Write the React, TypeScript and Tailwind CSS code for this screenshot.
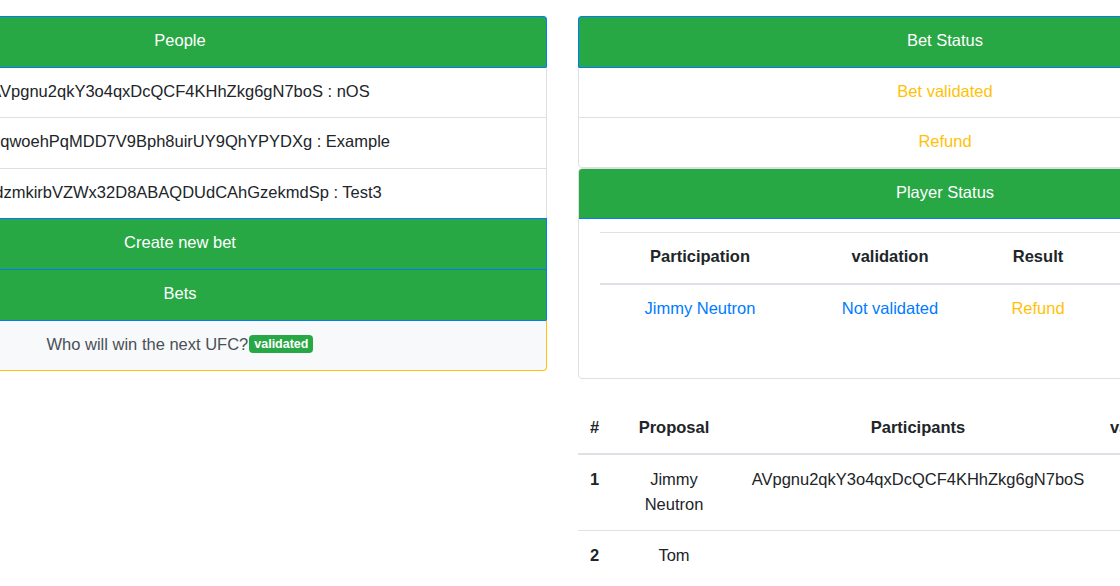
import React from "react";

const font = "font-['Liberation_Sans',Arial,Helvetica,sans-serif]";

function Item({
  children,
  h,
  kind,
  top = "gray",
  bottom,
  round,
  extra = "",
}: {
  children: React.ReactNode;
  h: string;
  kind: "green" | "white" | "light";
  top?: "blue" | "gray" | "none";
  bottom?: "gray" | "orange";
  round?: "t" | "b";
  extra?: string;
}) {
  const bg =
    kind === "green"
      ? "bg-[#28a745] text-white border-x-[#007bff]"
      : kind === "light"
      ? "bg-[#f8f9fa] text-[#495057] border-x-[#ffc107]"
      : "bg-white text-[#212529] border-x-[#dfdfdf]";
  const t = top === "blue" ? "border-t border-t-[#007bff]" : top === "gray" ? "border-t border-t-[#dfdfdf]" : "";
  const b =
    bottom === "gray"
      ? "border-b border-b-[#dfdfdf]"
      : bottom === "orange"
      ? "border-b border-b-[#ffc107]"
      : "";
  const r = round === "t" ? "rounded-t-[4px]" : round === "b" ? "rounded-b-[4px]" : "";
  return (
    <div className={`${h} ${bg} ${t} ${b} ${r} ${extra} border-x pb-[3px] flex items-center justify-center whitespace-nowrap text-[16.5px] leading-[25px]`}>
      {children}
    </div>
  );
}

export default function App() {
  return (
    <div className={`w-[1120px] h-[586px] overflow-hidden bg-white ${font}`}>
      <div className="flex gap-[31px] ml-[-187px] pt-[16px]">
        {/* Left column */}
        <div className="w-[734px] shrink-0 flex flex-col">
          <Item h="h-[51px]" kind="green" top="blue" round="t">People</Item>
          <Item h="h-[50px]" kind="white" top="blue">AVpgnu2qkY3o4qxDcQCF4KHhZkg6gN7boS : nOS</Item>
          <Item h="h-[51px]" kind="white">AKJqwoehPqMDD7V9Bph8uirUY9QhYPYDXg : Example</Item>
          <Item h="h-[50px]" kind="white" extra="pl-[5px]">AdzmkirbVZWx32D8ABAQDUdCAhGzekmdSp : Test3</Item>
          <Item h="h-[51px]" kind="green" top="blue">Create new bet</Item>
          <Item h="h-[51px]" kind="green" top="blue">Bets</Item>
          <Item h="h-[51px]" kind="light" top="blue" bottom="orange" round="b">
            <span>Who will win the next UFC?</span>
            <span className="ml-px bg-[#28a745] text-white text-[12.5px] leading-[12px] font-bold px-[5px] py-[3px] rounded-[4px]">
              validated
            </span>
          </Item>
        </div>

        {/* Right column */}
        <div className="w-[734px] shrink-0 flex flex-col">
          <Item h="h-[51px]" kind="green" top="blue" round="t">Bet Status</Item>
          <Item h="h-[50px]" kind="white" top="blue">
            <span className="text-[#ffc107]">Bet validated</span>
          </Item>
          <Item h="h-[51px]" kind="white" bottom="gray" round="b">
            <span className="text-[#ffc107]">Refund</span>
          </Item>

          <div className="border border-[#dfdfdf] rounded-[4px] overflow-hidden">
            <div className="h-[51px] -mx-px -mt-px pb-[3px] bg-[#28a745] text-white border border-[#007bff] flex items-center justify-center text-[16.5px] leading-[25px]">
              Player Status
            </div>
            <div className="px-[21px] pt-[13px] pb-[44px]">
              <table className="w-full border-collapse text-[16.5px] leading-[25px] text-[#212529]">
                <thead>
                  <tr className="h-[51px] border-t border-t-[#dee2e6] border-b-2 border-b-[#dee2e6]">
                    <th className="w-[200px] pb-[2px] font-bold text-center">Participation</th>
                    <th className="w-[180px] pb-[2px] font-bold text-center">validation</th>
                    <th className="w-[116px] pb-[2px] font-bold text-center">Result</th>
                    <th className="font-bold text-center"></th>
                  </tr>
                </thead>
                <tbody>
                  <tr className="h-[50px]">
                    <td className="pb-[2px] text-center text-[#007bff]">Jimmy Neutron</td>
                    <td className="pb-[2px] text-center text-[#007bff]">Not validated</td>
                    <td className="pb-[2px] text-center text-[#ffc107]">Refund</td>
                    <td></td>
                  </tr>
                </tbody>
              </table>
            </div>
          </div>

          <table className="mt-[24px] w-full border-collapse text-[16.5px] leading-[25px] text-[#212529] table-fixed">
            <thead>
              <tr className="border-b-2 border-b-[#dee2e6]">
                <th className="w-[32px] px-[12px] py-[12.5px] text-left font-bold">#</th>
                <th className="w-[128px] px-[12px] py-[12.5px] text-center font-bold">Proposal</th>
                <th className="w-[360px] px-[12px] py-[12.5px] text-center font-bold">Participants</th>
                <th className="px-[12px] py-[12.5px] text-left font-bold">validation</th>
              </tr>
            </thead>
            <tbody>
              <tr className="border-b border-b-[#dee2e6] align-top">
                <td className="px-[12px] py-[12.5px] font-bold">1</td>
                <td className="px-[12px] py-[12.5px] text-center">
                  Jimmy
                  <br />
                  Neutron
                </td>
                <td className="px-[12px] py-[12.5px] text-center whitespace-nowrap">AVpgnu2qkY3o4qxDcQCF4KHhZkg6gN7boS</td>
                <td className="px-[12px] py-[12.5px]"></td>
              </tr>
              <tr className="align-top">
                <td className="px-[12px] py-[12.5px] font-bold">2</td>
                <td className="px-[12px] py-[12.5px] text-center">Tom</td>
                <td className="px-[12px] py-[12.5px]"></td>
                <td className="px-[12px] py-[12.5px]"></td>
              </tr>
            </tbody>
          </table>
        </div>
      </div>
    </div>
  );
}
